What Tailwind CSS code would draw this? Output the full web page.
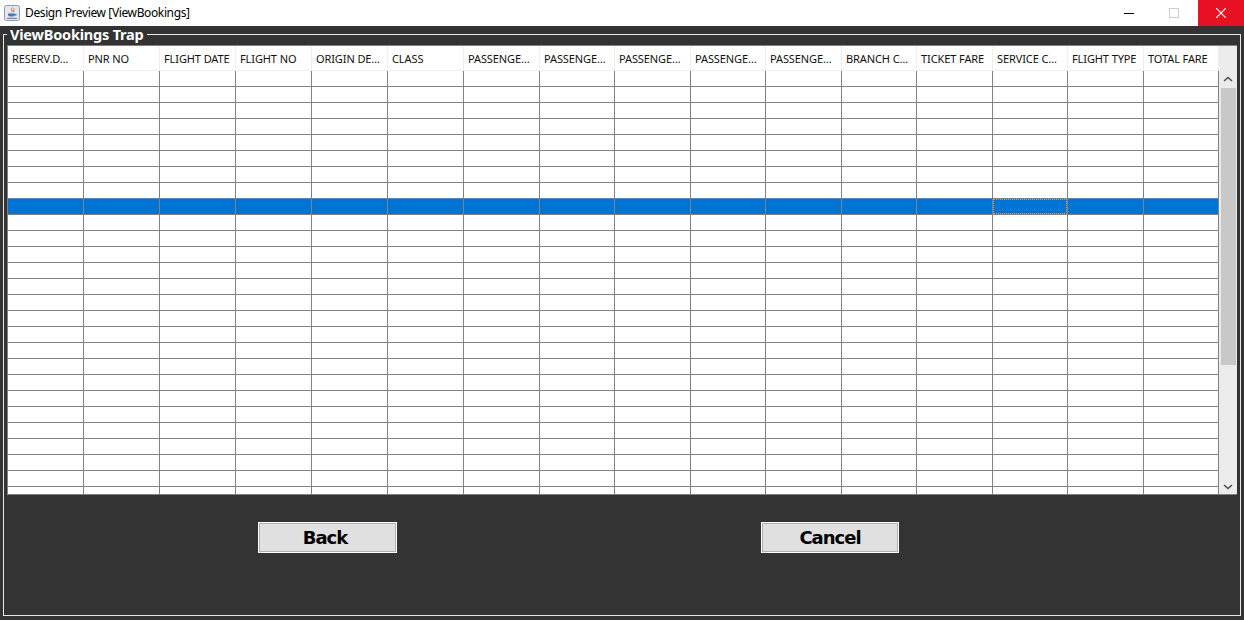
<!doctype html>
<html lang="en">
    <head>
        <meta charset="UTF-8" />
        <title>Design Preview [ViewBookings]</title>
        <script src="https://cdn.jsdelivr.net/npm/@tailwindcss/browser@4"></script>
    </head>
    <body class="bg-[#333333] w-[1244px] h-[620px] overflow-hidden font-['Noto_Sans',sans-serif]">
        <!-- title bar -->
        <header class="h-[26px] bg-white flex items-center text-black">
            <svg class="ml-[4px] w-[16px] h-[16px]" viewBox="0 0 16 16">
                <rect x="0.5" y="0.5" width="15" height="15" rx="2" fill="#e3e8ee" stroke="#8f9aa8" />
                <path d="M8.500 2.500c-2.500 2 1 3-1 5M10.500 3.500c-1.500 1 0 2-1 3.500" fill="none" stroke="#d9622b" stroke-width="1" />
                <path d="M4 8.500h7v1.200c0 1.300-1.500 1.800-3.500 1.800s-3.500-.5-3.500-1.800zM11 9h1.500v1.500h-1.500" fill="#4a76a8" />
                <path d="M3 13.300h10" stroke="#4a76a8" stroke-width="1" />
            </svg>
            <span class="ml-[5px] text-[12px] leading-none tracking-[-0.38px]">Design Preview [ViewBookings]</span>
            <div class="ml-auto flex items-center h-full">
                <div class="w-[46px] h-full flex items-center justify-center">
                    <div class="w-[10px] h-px bg-black"></div>
                </div>
                <div class="w-[46px] h-full flex items-center justify-center ml-[-1px]">
                    <div class="w-[10px] h-[10px] border border-[#cccccc]"></div>
                </div>
                <div class="w-[46px] h-full bg-[#e81123] flex items-center justify-center ml-[1px]">
                    <svg class="w-[10px] h-[10px]" viewBox="0 0 10 10">
                        <path d="M0 0L10 10M10 0L0 10" stroke="#fff" stroke-width="1.200" />
                    </svg>
                </div>
            </div>
        </header>

        <!-- ViewBookings Trap panel -->
        <fieldset class="ml-[3px] mt-[-2px] w-[1237px] h-[592px] border border-[#e8e8e8] px-[3px] pb-0">
            <legend class="px-[3px] text-white font-bold text-[14.500px] leading-[20px] font-['Noto_Sans',sans-serif] tracking-[-0.2px]">ViewBookings Trap</legend>

            <div class="mt-[1px] w-[1230px] h-[450px] border-t border-l border-b border-[#808080] bg-white flex">
                <div id="table" class="w-[1211px] h-full overflow-hidden"></div>
                <!-- scrollbar -->
                <div class="w-[18px] h-full bg-[#ececec] flex flex-col items-center">
                    <svg class="mt-[30px] w-[10px] h-[6px]" viewBox="0 0 10 6">
                        <path d="M1 5L5 1.500L9 5" fill="none" stroke="#505050" stroke-width="1.600" />
                    </svg>
                    <div class="mt-[6px] w-[15px] h-[277px] bg-[#c8c8c8]"></div>
                    <svg class="mt-auto mb-[4px] w-[10px] h-[6px]" viewBox="0 0 10 6">
                        <path d="M1 1L5 4.500L9 1" fill="none" stroke="#505050" stroke-width="1.600" />
                    </svg>
                </div>
            </div>

            <div class="flex mt-[27px]">
                <button class="ml-[251px] pr-[5px] w-[139px] h-[31px] bg-[#e0e0e0] border border-white outline outline-1 outline-[#b0b0b0] -outline-offset-2 text-black font-bold text-[18px] leading-none font-['DejaVu_Sans',sans-serif] tracking-[-1px]">Back</button>
                <button class="ml-[364px] w-[138px] h-[31px] bg-[#e0e0e0] border border-white outline outline-1 outline-[#b0b0b0] -outline-offset-2 text-black font-bold text-[18px] leading-none font-['DejaVu_Sans',sans-serif] tracking-[-1px]">Cancel</button>
            </div>
        </fieldset>

        <script>
            const headers = [
                "RESERV.D…", "PNR NO", "FLIGHT DATE", "FLIGHT NO", "ORIGIN DE…", "CLASS",
                "PASSENGE…", "PASSENGE…", "PASSENGE…", "PASSENGE…", "PASSENGE…",
                "BRANCH C…", "TICKET FARE", "SERVICE C…", "FLIGHT TYPE", "TOTAL FARE",
            ];
            const gridCols = "grid grid-cols-[76px_76px_76px_76px_76px_76px_76px_75px_76px_75px_76px_75px_76px_75px_76px_75px]";
            const selectedRow = 8;
            const focusCol = 13;

            let html = `<div class="${gridCols} h-[25px] border-b border-[#eeeeee]">`;
            headers.forEach(function (h) {
                html += `<div class="border-r border-[#eeeeee] pl-[4px] text-[11px] leading-[25px] text-[#111111] whitespace-nowrap overflow-hidden font-['Noto_Sans',sans-serif] tracking-[-0.1px]">${h}</div>`;
            });
            html += "</div>";

            for (let r = 0; r < 27; r++) {
                const rowBg = r === selectedRow ? "bg-[#0074d4]" : "bg-white";
                html += `<div class="${gridCols} h-[16px] ${rowBg} border-b border-[#808080]">`;
                headers.forEach(function (h, c) {
                    if (r === selectedRow && c === focusCol) {
                        html += '<div class="border-r border-[#808080]"><div class="h-full border border-dotted border-[#d9a066]"></div></div>';
                    } else {
                        html += '<div class="border-r border-[#808080]"></div>';
                    }
                });
                html += "</div>";
            }
            document.getElementById("table").innerHTML = html;
        </script>
    </body>
</html>
